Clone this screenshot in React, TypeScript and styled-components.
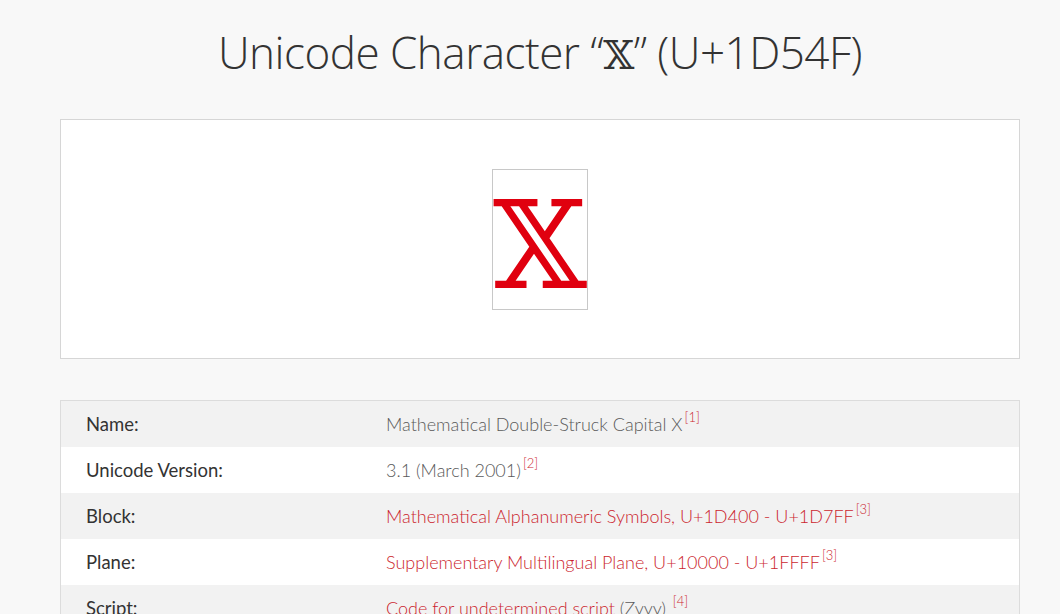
import styled, { createGlobalStyle } from 'styled-components';

const GlobalStyle = createGlobalStyle`
  html, body {
    margin: 0;
    padding: 0;
    background: #f8f8f8;
    font-family: Lato, "Open Sans", sans-serif;
    color: #333;
  }
`;

type Row = {
  label: string;
  value: string;
  extra?: string;
  link?: boolean;
  note: string;
};

const rows: Row[] = [
  { label: 'Name:', value: 'Mathematical Double-Struck Capital X', note: '[1]' },
  { label: 'Unicode Version:', value: '3.1 (March 2001)', note: '[2]' },
  { label: 'Block:', value: 'Mathematical Alphanumeric Symbols, U+1D400 - U+1D7FF', link: true, note: '[3]' },
  { label: 'Plane:', value: 'Supplementary Multilingual Plane, U+10000 - U+1FFFF', link: true, note: '[3]' },
  { label: 'Script:', value: 'Code for undetermined script', extra: ' (Zyyy) ', link: true, note: '[4]' },
];

function App(): JSX.Element {
  return (
    <Page>
      <GlobalStyle />
      <Title>
        Unicode Character “<Glyph>𝕏</Glyph>” (U+1D54F)
      </Title>
      <Preview>
        <CharBox>
          <BigChar>𝕏</BigChar>
        </CharBox>
      </Preview>
      <Table>
        <tbody>
          {rows.map((r, i) => (
            <tr key={r.label}>
              <Label $odd={i % 2 === 0}>{r.label}</Label>
              <Value $odd={i % 2 === 0}>
                {r.link ? <Link>{r.value}</Link> : r.value}
                {r.extra}
                <Note>{r.note}</Note>
              </Value>
            </tr>
          ))}
        </tbody>
      </Table>
    </Page>
  );
}

export default App;

const Page = styled.div`
  width: 960px;
  margin: 0 40px 0 60px;
  padding-top: 22px;
`;

const Title = styled.h1`
  margin: 0 0 37px;
  text-align: center;
  font-family: "Open Sans", Lato, sans-serif;
  font-weight: 300;
  font-size: 44px;
  letter-spacing: -0.5px;
  line-height: 60px;
  color: #333;
`;

const Glyph = styled.span`
  font-family: "DejaVu Serif", serif;
  font-weight: 400;
  font-size: 40px;
  line-height: 1;
`;

const Preview = styled.div`
  background: #fff;
  border: 1px solid #d6d6d6;
  height: 238px;
  display: flex;
  align-items: center;
  justify-content: center;
`;

const CharBox = styled.div`
  width: 94px;
  height: 139px;
  border: 1px solid #c8c8c8;
  display: flex;
  align-items: center;
  justify-content: center;
`;

const BigChar = styled.span`
  font-family: "DejaVu Serif", serif;
  font-size: 121px;
  line-height: 1;
  color: #e0000f;
  margin: 14px 0 0 0;
`;

const Table = styled.table`
  width: 100%;
  margin-top: 41px;
  border-collapse: collapse;
  border: 1px solid #dcdcdc;
  font-size: 18px;
`;

const Label = styled.td<{ $odd: boolean }>`
  width: 300px;
  height: 46px;
  padding: 0 0 0 25px;
  background: ${({ $odd }) => ($odd ? '#f2f2f2' : '#fff')};
  color: #333;
  font-size: 18.5px;
`;

const Value = styled.td<{ $odd: boolean }>`
  padding: 0;
  background: ${({ $odd }) => ($odd ? '#f2f2f2' : '#fff')};
  color: #5a5a5a;
  font-weight: 300;
`;

const Link = styled.a`
  color: #cc1f2e;
  text-decoration: none;
`;

const Note = styled.sup`
  color: #cc1f2e;
  font-size: 13px;
  margin-left: 2px;
  vertical-align: baseline;
  position: relative;
  top: -9px;
`;
